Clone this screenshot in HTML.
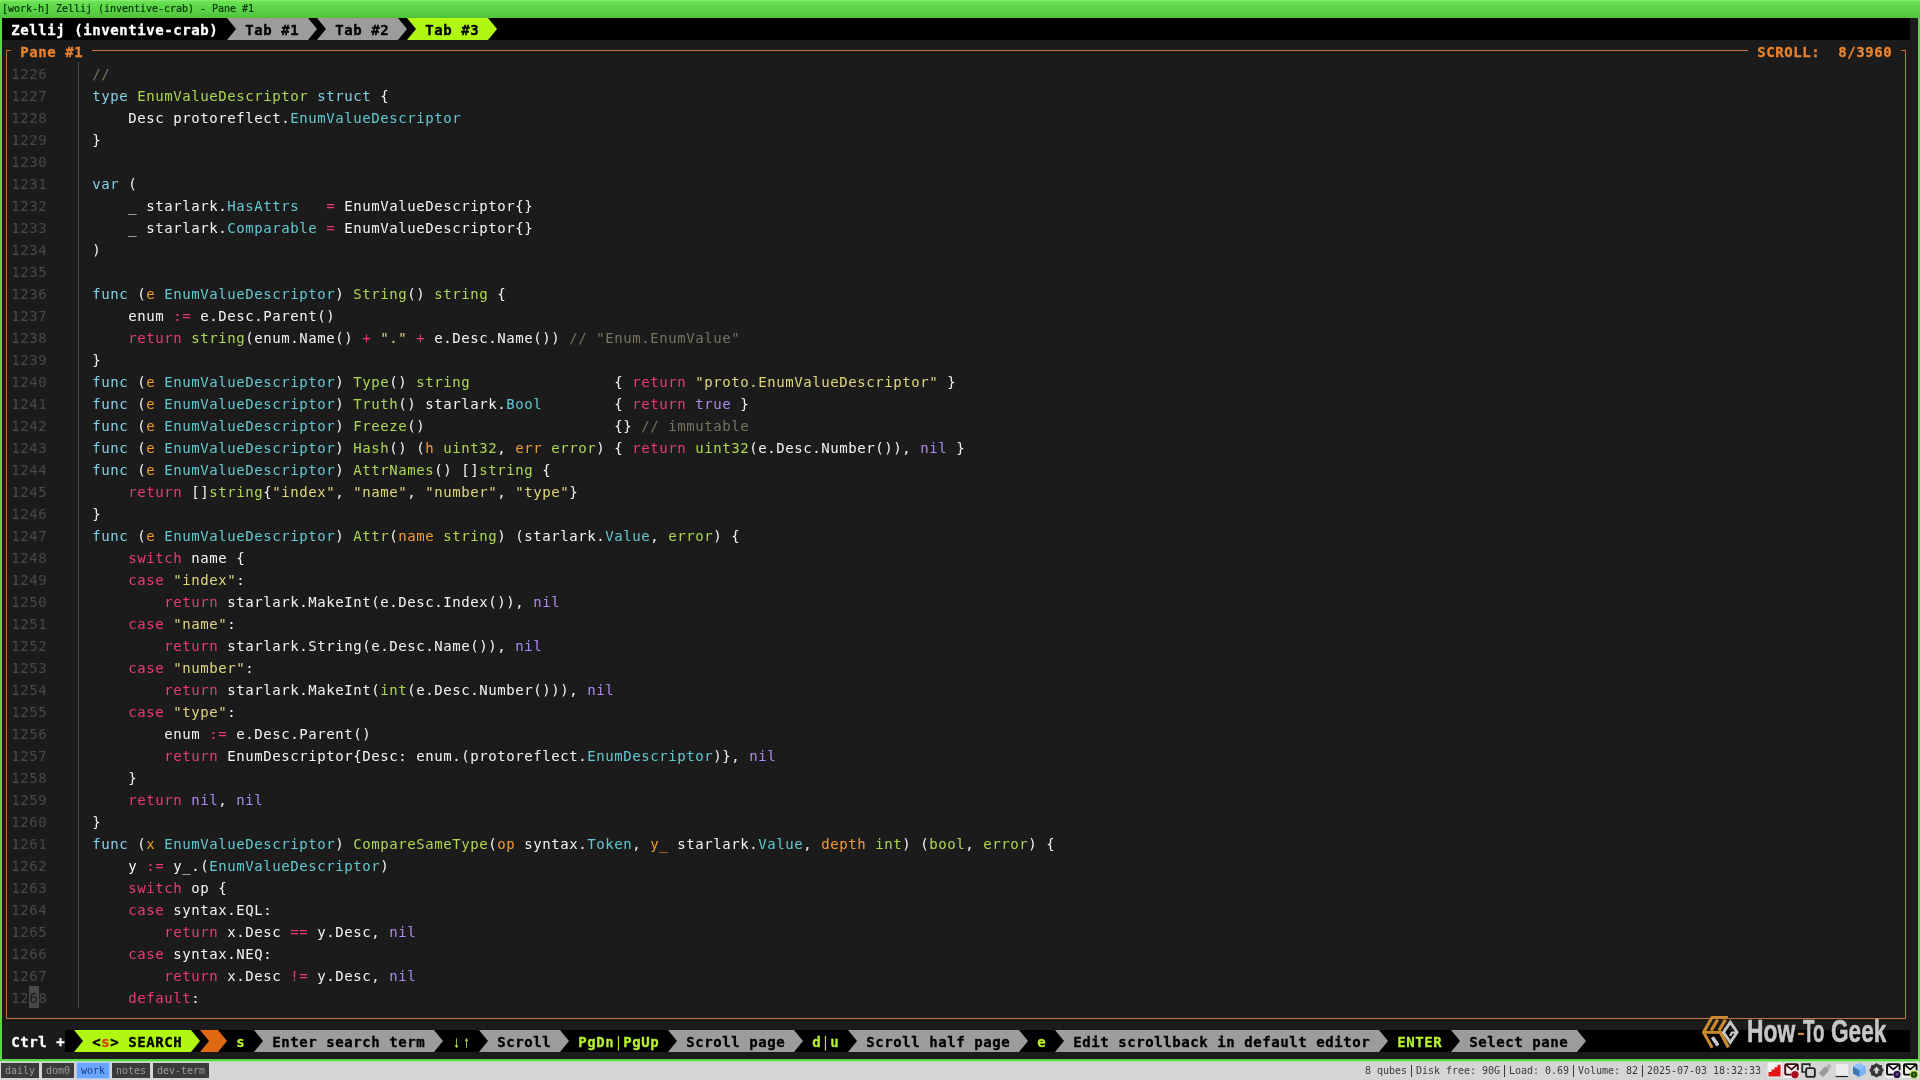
<!DOCTYPE html>
<html><head><meta charset="utf-8"><title>Zellij</title><style>
html,body{margin:0;padding:0}
body{width:1920px;height:1080px;overflow:hidden;position:relative;background:#d6d6d6;font-family:"DejaVu Sans Mono","Liberation Mono",monospace}
#win{position:absolute;left:0;top:0;width:1920px;height:1061px;background:#5ed44a}
#title{will-change:transform;position:absolute;left:0;top:0;width:1920px;height:18px;background:linear-gradient(#8cf276 0,#66df50 2px,#5cd648 9px,#4fc23c 18px)}
#title span{position:absolute;left:2px;top:3px;font-size:10px;line-height:12px;letter-spacing:-0.0206px;color:#063206;-webkit-text-stroke:0.2px;white-space:pre}
#term{will-change:transform;position:absolute;left:2px;top:18px;width:1916px;height:1041px;background:#1b1b1b;overflow:hidden}
.r{position:absolute;text-indent:0.3px;height:22px;line-height:22px;padding-top:1px;box-sizing:border-box;font-size:14px;letter-spacing:0.5713px;white-space:pre;color:#f4f4f0}
.b{font-weight:bold;-webkit-text-stroke:0.3px}
.fill{position:absolute;height:22px}
.ar{position:absolute;width:9px;height:22px}
.ar i{position:absolute;left:0;top:0;width:9px;height:22px;clip-path:polygon(0 0,100% 50%,0 100%)}
.ln1{position:absolute}
.ln{color:#484848}
.cur{background:#484848;color:#1b1b1b;display:inline-block;height:22px;margin-top:-1px;padding-top:1px;box-sizing:border-box;vertical-align:top}
.k{color:#84d2e6}.t{color:#62c8d0}.g{color:#add752}.p{color:#ee3a70}.o{color:#f29c30}.s{color:#e0d67c}.n{color:#aa8aee}.c{color:#77735f}
.aw{display:inline-block;font-weight:normal;-webkit-text-stroke:0;color:#b0dc58;transform:scale(0.72,1.28);transform-origin:50% 62%}
.sep{font-weight:normal;color:#c4dc30;-webkit-text-stroke:0}

.wmtext{position:absolute;top:993.3px;font-family:"Liberation Sans","DejaVu Sans",sans-serif;font-weight:bold;font-size:32px;line-height:40px;color:#c6c6c6;white-space:pre;transform-origin:0 0;-webkit-text-stroke:0.6px #c6c6c6}
.wmtext.hy{color:#d08a34;-webkit-text-stroke:0}

#bb{will-change:transform;position:absolute;left:0;top:1061px;width:1920px;height:19px;background:#d5d5d5;border-top:1px solid #aee2a6;box-sizing:border-box;font-size:10px;letter-spacing:-0.0206px;white-space:pre}
#bb>svg{margin-top:-1px}
.tb{position:absolute;top:1px;height:15px;line-height:15px;background:#3b3b3b;color:#9c9c9c;text-align:center}
.tb.act{background:#6aa6ff;color:#153e88;box-shadow:0 0 0 1px #a4ccff}
.st{position:absolute;top:1px;height:15px;line-height:15px;color:#3a3a3a}
.sp{position:absolute;top:3px;width:1px;height:12px;background:#3a3a3a}
</style></head><body>
<div id="win">
<div id="title"><span>[work-h] Zellij (inventive-crab) - Pane #1</span></div>
<div id="term">
<div class="fill" style="top:0;left:0;width:1908px;background:#000"></div>
<div class="r b" style="top:0px;left:0px;width:225px;color:#ffffff;"> Zellij (inventive-crab) </div>
<div class="ar" style="top:0px;left:225px;background:#9c9c9c"><i style="background:#000000"></i></div>
<div class="r b" style="top:0px;left:234px;width:72px;background:#9c9c9c;color:#000000;"> Tab #1 </div>
<div class="ar" style="top:0px;left:306px;background:#000000"><i style="background:#9c9c9c"></i></div>
<div class="ar" style="top:0px;left:315px;background:#9c9c9c"><i style="background:#000000"></i></div>
<div class="r b" style="top:0px;left:324px;width:72px;background:#9c9c9c;color:#000000;"> Tab #2 </div>
<div class="ar" style="top:0px;left:396px;background:#000000"><i style="background:#9c9c9c"></i></div>
<div class="ar" style="top:0px;left:405px;background:#b0f812"><i style="background:#000000"></i></div>
<div class="r b" style="top:0px;left:414px;width:72px;background:#b0f812;color:#000000;"> Tab #3 </div>
<div class="ar" style="top:0px;left:486px;background:#000000"><i style="background:#b0f812"></i></div>
<div class="fill" style="top:1012px;left:63px;width:1845px;background:#000"></div>
<div class="r b" style="top:1012px;left:0px;width:63px;color:#ffffff;"> Ctrl +</div>
<div class="ar" style="top:1012px;left:72px;background:#b0f812"><i style="background:#000000"></i></div>
<div class="r b" style="top:1012px;left:81px;width:108px;background:#b0f812;color:#000"> &lt;<span style="color:#d8420c">s</span>&gt; SEARCH </div>
<div class="ar" style="top:1012px;left:189px;background:#000000"><i style="background:#b0f812"></i></div>
<div class="ar" style="top:1012px;left:198px;background:#e06a14"><i style="background:#000000"></i></div>
<div class="r b" style="top:1012px;left:207px;width:9px;background:#e06a14;color:#000000;"> </div>
<div class="ar" style="top:1012px;left:216px;background:#000000"><i style="background:#e06a14"></i></div>
<div class="r b" style="top:1012px;left:225px;width:27px;color:#b4f02c"> s </div>
<div class="ar" style="top:1012px;left:252px;background:#9c9c9c"><i style="background:#000000"></i></div>
<div class="r b" style="top:1012px;left:261px;width:171px;background:#9c9c9c;color:#000000;"> Enter search term </div>
<div class="ar" style="top:1012px;left:432px;background:#000000"><i style="background:#9c9c9c"></i></div>
<div class="r b" style="top:1012px;left:441px;width:36px;color:#b4f02c"> <span class="aw">↓</span><span class="aw">↑</span> </div>
<div class="ar" style="top:1012px;left:477px;background:#9c9c9c"><i style="background:#000000"></i></div>
<div class="r b" style="top:1012px;left:486px;width:72px;background:#9c9c9c;color:#000000;"> Scroll </div>
<div class="ar" style="top:1012px;left:558px;background:#000000"><i style="background:#9c9c9c"></i></div>
<div class="r b" style="top:1012px;left:567px;width:99px;color:#b4f02c"> PgDn<span class="sep">|</span>PgUp </div>
<div class="ar" style="top:1012px;left:666px;background:#9c9c9c"><i style="background:#000000"></i></div>
<div class="r b" style="top:1012px;left:675px;width:117px;background:#9c9c9c;color:#000000;"> Scroll page </div>
<div class="ar" style="top:1012px;left:792px;background:#000000"><i style="background:#9c9c9c"></i></div>
<div class="r b" style="top:1012px;left:801px;width:45px;color:#b4f02c"> d<span class="sep">|</span>u </div>
<div class="ar" style="top:1012px;left:846px;background:#9c9c9c"><i style="background:#000000"></i></div>
<div class="r b" style="top:1012px;left:855px;width:162px;background:#9c9c9c;color:#000000;"> Scroll half page </div>
<div class="ar" style="top:1012px;left:1017px;background:#000000"><i style="background:#9c9c9c"></i></div>
<div class="r b" style="top:1012px;left:1026px;width:27px;color:#b4f02c"> e </div>
<div class="ar" style="top:1012px;left:1053px;background:#9c9c9c"><i style="background:#000000"></i></div>
<div class="r b" style="top:1012px;left:1062px;width:315px;background:#9c9c9c;color:#000000;"> Edit scrollback in default editor </div>
<div class="ar" style="top:1012px;left:1377px;background:#000000"><i style="background:#9c9c9c"></i></div>
<div class="r b" style="top:1012px;left:1386px;width:63px;color:#b4f02c"> ENTER </div>
<div class="ar" style="top:1012px;left:1449px;background:#9c9c9c"><i style="background:#000000"></i></div>
<div class="r b" style="top:1012px;left:1458px;width:117px;background:#9c9c9c;color:#000000;"> Select pane </div>
<div class="ar" style="top:1012px;left:1575px;background:#000000"><i style="background:#9c9c9c"></i></div>
<div class="ln1" style="top:32px;left:4px;width:5px;height:1px;background:#c9703c"></div>
<div class="ln1" style="top:32px;left:90px;width:1656px;height:1px;background:#c9703c"></div>
<div class="ln1" style="top:32px;left:1899px;width:5px;height:1px;background:#c9703c"></div>
<div class="ln1" style="top:1000px;left:4px;width:1900px;height:1px;background:#c9703c"></div>
<div class="ln1" style="top:32px;left:4px;width:1px;height:969px;background:#c9703c"></div>
<div class="ln1" style="top:32px;left:1903px;width:1px;height:969px;background:#c9703c"></div>
<div class="ln1" style="top:44px;left:76px;width:1px;height:946px;background:#4c4c4c"></div>
<div class="r b" style="top:22px;left:18px;color:#e8822f">Pane #1</div>
<div class="r b" style="top:22px;left:1755px;color:#e8822f">SCROLL:  8/3960</div>
<div class="r ln" style="top:44px;left:9px">1226</div>
<div class="r " style="top:44px;left:90px"><span class="c">//</span></div>
<div class="r ln" style="top:66px;left:9px">1227</div>
<div class="r " style="top:66px;left:90px"><span class="k">type</span> <span class="g">EnumValueDescriptor</span> <span class="k">struct</span> {</div>
<div class="r ln" style="top:88px;left:9px">1228</div>
<div class="r " style="top:88px;left:90px">    Desc protoreflect.<span class="t">EnumValueDescriptor</span></div>
<div class="r ln" style="top:110px;left:9px">1229</div>
<div class="r " style="top:110px;left:90px">}</div>
<div class="r ln" style="top:132px;left:9px">1230</div>
<div class="r ln" style="top:154px;left:9px">1231</div>
<div class="r " style="top:154px;left:90px"><span class="k">var</span> (</div>
<div class="r ln" style="top:176px;left:9px">1232</div>
<div class="r " style="top:176px;left:90px">    _ starlark.<span class="t">HasAttrs</span>   <span class="p">=</span> EnumValueDescriptor{}</div>
<div class="r ln" style="top:198px;left:9px">1233</div>
<div class="r " style="top:198px;left:90px">    _ starlark.<span class="t">Comparable</span> <span class="p">=</span> EnumValueDescriptor{}</div>
<div class="r ln" style="top:220px;left:9px">1234</div>
<div class="r " style="top:220px;left:90px">)</div>
<div class="r ln" style="top:242px;left:9px">1235</div>
<div class="r ln" style="top:264px;left:9px">1236</div>
<div class="r " style="top:264px;left:90px"><span class="k">func</span> (<span class="o">e</span> <span class="t">EnumValueDescriptor</span>) <span class="g">String</span>() <span class="g">string</span> {</div>
<div class="r ln" style="top:286px;left:9px">1237</div>
<div class="r " style="top:286px;left:90px">    enum <span class="p">:=</span> e.Desc.Parent()</div>
<div class="r ln" style="top:308px;left:9px">1238</div>
<div class="r " style="top:308px;left:90px">    <span class="p">return</span> <span class="g">string</span>(enum.Name() <span class="p">+</span> <span class="s">"."</span> <span class="p">+</span> e.Desc.Name()) <span class="c">// "Enum.EnumValue"</span></div>
<div class="r ln" style="top:330px;left:9px">1239</div>
<div class="r " style="top:330px;left:90px">}</div>
<div class="r ln" style="top:352px;left:9px">1240</div>
<div class="r " style="top:352px;left:90px"><span class="k">func</span> (<span class="o">e</span> <span class="t">EnumValueDescriptor</span>) <span class="g">Type</span>() <span class="g">string</span>                { <span class="p">return</span> <span class="s">"proto.EnumValueDescriptor"</span> }</div>
<div class="r ln" style="top:374px;left:9px">1241</div>
<div class="r " style="top:374px;left:90px"><span class="k">func</span> (<span class="o">e</span> <span class="t">EnumValueDescriptor</span>) <span class="g">Truth</span>() starlark.<span class="t">Bool</span>        { <span class="p">return</span> <span class="n">true</span> }</div>
<div class="r ln" style="top:396px;left:9px">1242</div>
<div class="r " style="top:396px;left:90px"><span class="k">func</span> (<span class="o">e</span> <span class="t">EnumValueDescriptor</span>) <span class="g">Freeze</span>()                     {} <span class="c">// immutable</span></div>
<div class="r ln" style="top:418px;left:9px">1243</div>
<div class="r " style="top:418px;left:90px"><span class="k">func</span> (<span class="o">e</span> <span class="t">EnumValueDescriptor</span>) <span class="g">Hash</span>() (<span class="o">h</span> <span class="g">uint32</span>, <span class="o">err</span> <span class="g">error</span>) { <span class="p">return</span> <span class="g">uint32</span>(e.Desc.Number()), <span class="n">nil</span> }</div>
<div class="r ln" style="top:440px;left:9px">1244</div>
<div class="r " style="top:440px;left:90px"><span class="k">func</span> (<span class="o">e</span> <span class="t">EnumValueDescriptor</span>) <span class="g">AttrNames</span>() []<span class="g">string</span> {</div>
<div class="r ln" style="top:462px;left:9px">1245</div>
<div class="r " style="top:462px;left:90px">    <span class="p">return</span> []<span class="g">string</span>{<span class="s">"index"</span>, <span class="s">"name"</span>, <span class="s">"number"</span>, <span class="s">"type"</span>}</div>
<div class="r ln" style="top:484px;left:9px">1246</div>
<div class="r " style="top:484px;left:90px">}</div>
<div class="r ln" style="top:506px;left:9px">1247</div>
<div class="r " style="top:506px;left:90px"><span class="k">func</span> (<span class="o">e</span> <span class="t">EnumValueDescriptor</span>) <span class="g">Attr</span>(<span class="o">name</span> <span class="g">string</span>) (starlark.<span class="t">Value</span>, <span class="g">error</span>) {</div>
<div class="r ln" style="top:528px;left:9px">1248</div>
<div class="r " style="top:528px;left:90px">    <span class="p">switch</span> name {</div>
<div class="r ln" style="top:550px;left:9px">1249</div>
<div class="r " style="top:550px;left:90px">    <span class="p">case</span> <span class="s">"index"</span>:</div>
<div class="r ln" style="top:572px;left:9px">1250</div>
<div class="r " style="top:572px;left:90px">        <span class="p">return</span> starlark.MakeInt(e.Desc.Index()), <span class="n">nil</span></div>
<div class="r ln" style="top:594px;left:9px">1251</div>
<div class="r " style="top:594px;left:90px">    <span class="p">case</span> <span class="s">"name"</span>:</div>
<div class="r ln" style="top:616px;left:9px">1252</div>
<div class="r " style="top:616px;left:90px">        <span class="p">return</span> starlark.String(e.Desc.Name()), <span class="n">nil</span></div>
<div class="r ln" style="top:638px;left:9px">1253</div>
<div class="r " style="top:638px;left:90px">    <span class="p">case</span> <span class="s">"number"</span>:</div>
<div class="r ln" style="top:660px;left:9px">1254</div>
<div class="r " style="top:660px;left:90px">        <span class="p">return</span> starlark.MakeInt(<span class="g">int</span>(e.Desc.Number())), <span class="n">nil</span></div>
<div class="r ln" style="top:682px;left:9px">1255</div>
<div class="r " style="top:682px;left:90px">    <span class="p">case</span> <span class="s">"type"</span>:</div>
<div class="r ln" style="top:704px;left:9px">1256</div>
<div class="r " style="top:704px;left:90px">        enum <span class="p">:=</span> e.Desc.Parent()</div>
<div class="r ln" style="top:726px;left:9px">1257</div>
<div class="r " style="top:726px;left:90px">        <span class="p">return</span> EnumDescriptor{Desc: enum.(protoreflect.<span class="t">EnumDescriptor</span>)}, <span class="n">nil</span></div>
<div class="r ln" style="top:748px;left:9px">1258</div>
<div class="r " style="top:748px;left:90px">    }</div>
<div class="r ln" style="top:770px;left:9px">1259</div>
<div class="r " style="top:770px;left:90px">    <span class="p">return</span> <span class="n">nil</span>, <span class="n">nil</span></div>
<div class="r ln" style="top:792px;left:9px">1260</div>
<div class="r " style="top:792px;left:90px">}</div>
<div class="r ln" style="top:814px;left:9px">1261</div>
<div class="r " style="top:814px;left:90px"><span class="k">func</span> (<span class="o">x</span> <span class="t">EnumValueDescriptor</span>) <span class="g">CompareSameType</span>(<span class="o">op</span> syntax.<span class="t">Token</span>, <span class="o">y_</span> starlark.<span class="t">Value</span>, <span class="o">depth</span> <span class="g">int</span>) (<span class="g">bool</span>, <span class="g">error</span>) {</div>
<div class="r ln" style="top:836px;left:9px">1262</div>
<div class="r " style="top:836px;left:90px">    y <span class="p">:=</span> y_.(<span class="t">EnumValueDescriptor</span>)</div>
<div class="r ln" style="top:858px;left:9px">1263</div>
<div class="r " style="top:858px;left:90px">    <span class="p">switch</span> op {</div>
<div class="r ln" style="top:880px;left:9px">1264</div>
<div class="r " style="top:880px;left:90px">    <span class="p">case</span> syntax.EQL:</div>
<div class="r ln" style="top:902px;left:9px">1265</div>
<div class="r " style="top:902px;left:90px">        <span class="p">return</span> x.Desc <span class="p">==</span> y.Desc, <span class="n">nil</span></div>
<div class="r ln" style="top:924px;left:9px">1266</div>
<div class="r " style="top:924px;left:90px">    <span class="p">case</span> syntax.NEQ:</div>
<div class="r ln" style="top:946px;left:9px">1267</div>
<div class="r " style="top:946px;left:90px">        <span class="p">return</span> x.Desc <span class="p">!=</span> y.Desc, <span class="n">nil</span></div>
<div class="r ln" style="top:968px;left:9px">12<span class="cur">6</span>8</div>
<div class="r " style="top:968px;left:90px">    <span class="p">default</span>:</div>

<svg class="wmlogo" style="position:absolute;left:1698px;top:996px" width="42" height="36" viewBox="0 0 42 36">
<g fill="none" stroke="#c98a2c" stroke-width="3.1" stroke-linecap="butt" stroke-linejoin="miter">
<path d="M28 3.2 L11.2 3.2" stroke-width="2.4"/>
<path d="M12.2 3 L3.6 18.3 L12.2 33.8"/>
<path d="M17.6 5.6 L11.2 16.6"/>
<path d="M25.4 5.6 L19 16.6"/>
<path d="M4.6 18.3 L21 18.3" stroke-width="3"/>
<path d="M20 17.6 L28.4 33.4" stroke-width="3.4"/>
</g>
<path d="M12.4 23.2 L18 31.6" fill="none" stroke="#c9c9c9" stroke-width="3.6"/>
<g fill="none" stroke="#c6c6c6" stroke-width="2.9" stroke-linejoin="miter">
<path d="M30.3 8.2 L23.5 18.3 L30.3 28.4 L37.1 18.3 Z"/>
<path d="M36.8 18.6 L32 18.6 L30 21.8" stroke-width="2.4"/>
</g>
</svg>
<div class="wmtext" style="left:1745.3px;transform:scaleX(0.713)">How</div><div class="wmtext hy" style="left:1795.0px;top:995.0px;font-size:19px;transform:scaleX(1.24)">-</div><div class="wmtext" style="left:1801.3px;transform:scaleX(0.587)">To</div><div class="wmtext" style="left:1829.0px;transform:scaleX(0.706)">Geek</div>

</div>
</div>
<div id="bb">
<div class="tb" style="left:1px;width:38px">daily</div>
<div class="tb" style="left:42px;width:32px">dom0</div>
<div class="tb act" style="left:77px;width:32px">work</div>
<div class="tb" style="left:112px;width:38px">notes</div>
<div class="tb" style="left:153px;width:56px">dev-term</div>
<div class="st" style="left:1365px">8 qubes</div>
<div class="st" style="left:1416px">Disk free: 90G</div>
<div class="st" style="left:1509px">Load: 0.69</div>
<div class="st" style="left:1578px">Volume: 82</div>
<div class="st" style="left:1647px">2025-07-03 18:32:33</div>
<div class="sp" style="left:1411px"></div>
<div class="sp" style="left:1504px"></div>
<div class="sp" style="left:1573px"></div>
<div class="sp" style="left:1642px"></div>

<svg style="position:absolute;left:1764px;top:0px" width="156" height="19" viewBox="1764 1061 156 19">
<!-- signal -->
<rect x="1767.5" y="1062.5" width="14.5" height="15" fill="#f4f4f4"/>
<path d="M1768.5 1076.6 V1072 H1771.5 V1069.6 H1774.5 V1067.2 H1777.5 V1064.8 H1780.6 V1076.6 Z" fill="#e81414"/>
<!-- mail red -->
<rect x="1783.4" y="1062.5" width="16.3" height="15.5" fill="#f6ecec"/><path d="M1791.4 1074.6 H1786.8 Q1785.2 1074.6 1785.2 1073.0 V1065.3 Q1785.2 1064.1 1786.4 1064.1 H1796.6 Q1797.8 1064.1 1797.8 1065.3 V1070.3" fill="none" stroke="#3a0a10" stroke-width="1.9"/><path d="M1785.8 1064.7 L1791.5 1069.5 L1797.2 1064.7" fill="none" stroke="#3a0a10" stroke-width="1.7"/>
<circle cx="1795" cy="1074.6" r="3.7" fill="#a80c20"/>
<!-- copy -->
<path d="M1805 1072 H1802.2 V1064.2 H1809.8 V1066.6" fill="none" stroke="#2a2a2a" stroke-width="1.7"/>
<rect x="1806.1" y="1068.1" width="8.8" height="8.8" rx="2" fill="#cfcfcf" stroke="#262626" stroke-width="1.9"/>
<!-- usb -->
<g transform="rotate(-47 1825.5 1070)">
<rect x="1818.6" y="1067.2" width="9.6" height="5.8" rx="1.2" fill="#9a9a9a"/>
<rect x="1828.2" y="1068" width="4.2" height="4.2" fill="#b4b4b4"/>
</g>
<!-- laptop -->
<rect x="1836" y="1064" width="12" height="11.4" fill="#ececec"/>
<rect x="1835.6" y="1076" width="12.2" height="1.1" fill="#1c1c1c"/>
<!-- qubes cube -->
<path d="M1859.4 1063 L1865.8 1066.5 V1073.5 L1859.4 1076.9 L1853 1073.5 V1066.5 Z" fill="#7db2f4"/>
<path d="M1853 1066.5 L1859.4 1070 V1076.9 L1853 1073.5 Z" fill="#3b78b4"/>
<path d="M1853 1066.5 L1859.4 1063 L1865.8 1066.5 L1859.4 1070 Z" fill="#8cc0fa"/>
<!-- gear -->
<g fill="#383838">
<circle cx="1876.5" cy="1070.3" r="6.3"/>
<rect x="1871.2" y="1065" width="10.6" height="10.6"/>
<rect x="1871.2" y="1065" width="10.6" height="10.6" transform="rotate(45 1876.5 1070.3)"/>
</g>
<path d="M1876.5 1066.8 L1880 1070.5 H1877.9 V1073.6 H1875.1 V1070.5 H1873 Z" fill="#d8d4d0"/>
<!-- mail purple -->
<rect x="1885.2" y="1062.5" width="16.3" height="15.5" fill="#f3eef6"/><path d="M1893.2 1074.6 H1888.6 Q1887.0 1074.6 1887.0 1073.0 V1065.3 Q1887.0 1064.1 1888.2 1064.1 H1898.4 Q1899.6 1064.1 1899.6 1065.3 V1070.3" fill="none" stroke="#0a0a0a" stroke-width="1.9"/><path d="M1887.6 1064.7 L1893.3 1069.5 L1899.0 1064.7" fill="none" stroke="#0a0a0a" stroke-width="1.7"/>
<circle cx="1897" cy="1074.4" r="3.6" fill="#2c1246"/>
<circle cx="1897" cy="1074.4" r="1.3" fill="#6a4a90"/>
<!-- mail green -->
<rect x="1902.2" y="1062.5" width="16.3" height="15.5" fill="#eef5e4"/><path d="M1910.2 1074.6 H1905.6 Q1904.0 1074.6 1904.0 1073.0 V1065.3 Q1904.0 1064.1 1905.2 1064.1 H1915.4 Q1916.6 1064.1 1916.6 1065.3 V1070.3" fill="none" stroke="#0a0a0a" stroke-width="1.9"/><path d="M1904.6 1064.7 L1910.3 1069.5 L1916.0 1064.7" fill="none" stroke="#0a0a0a" stroke-width="1.7"/>
<circle cx="1914" cy="1074.6" r="4.1" fill="#a4d838"/>
<circle cx="1914" cy="1074.6" r="3.2" fill="#1f4a06"/>
<circle cx="1914" cy="1074.6" r="1.1" fill="#5f9a20"/>
</svg>

</div>
</body></html>
